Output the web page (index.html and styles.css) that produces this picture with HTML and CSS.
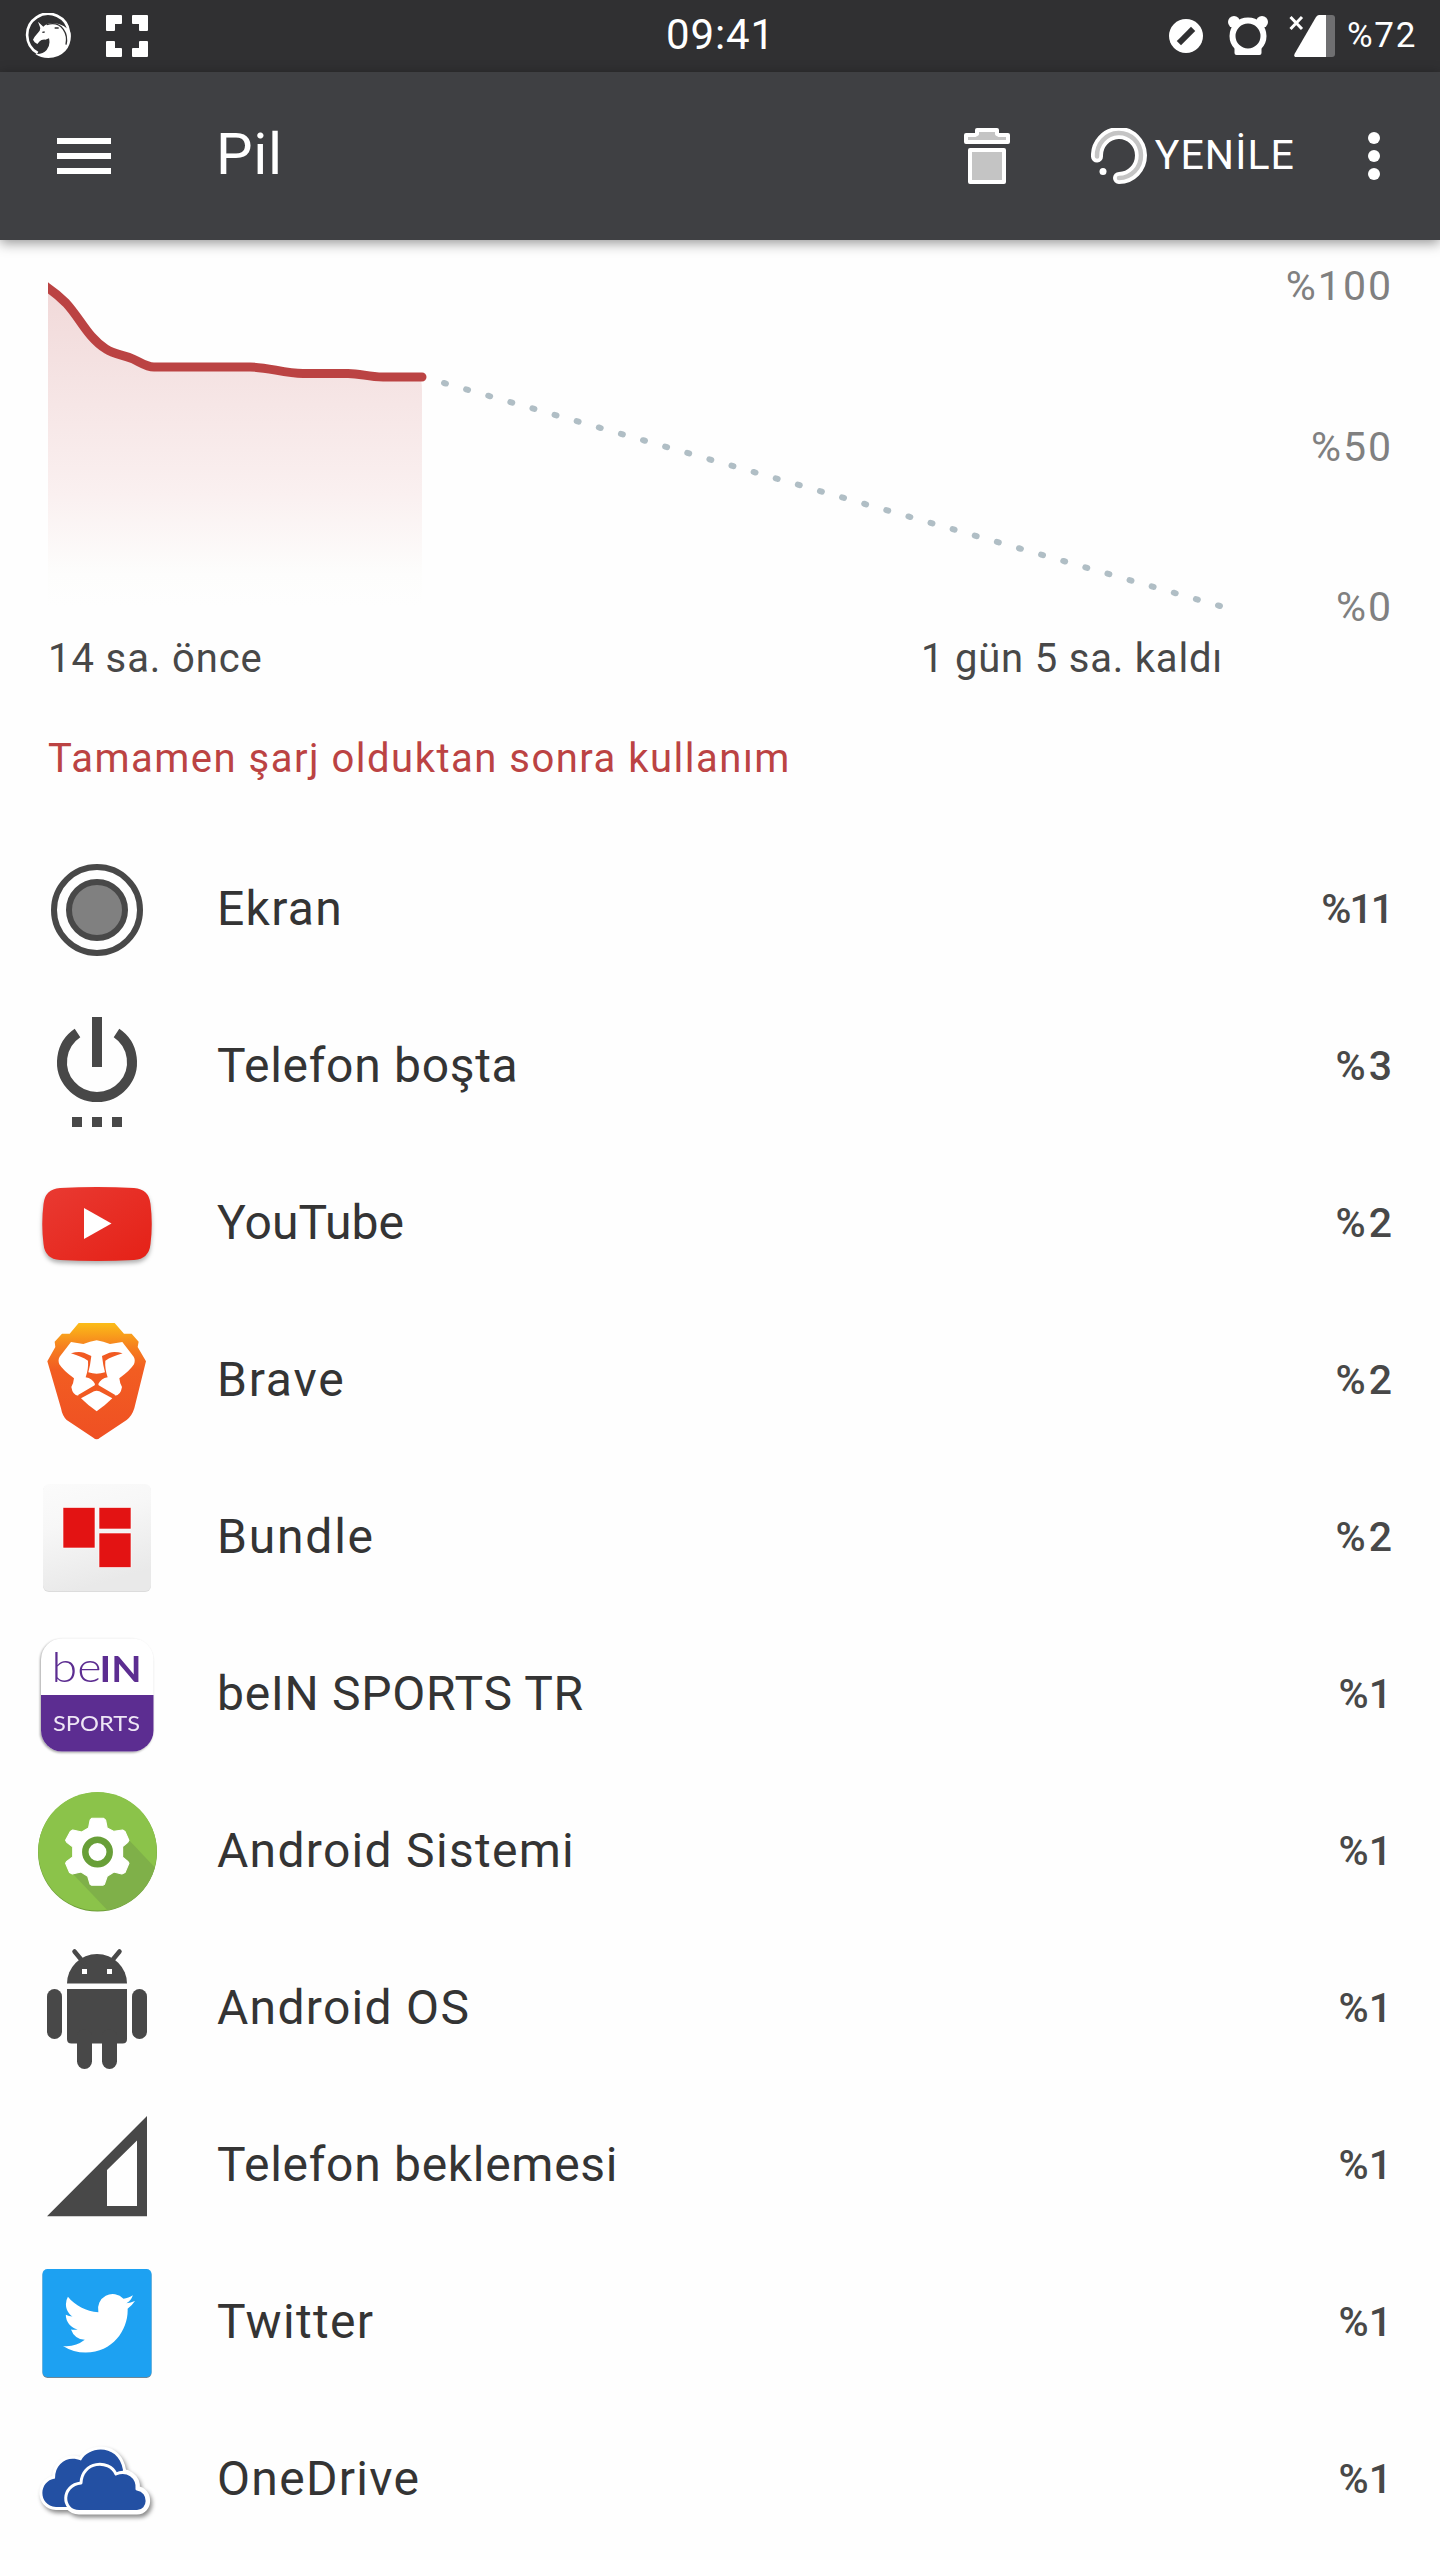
FILE: index.html
```html
<!DOCTYPE html>
<html lang="tr">
<head>
    <meta charset="UTF-8">
    <meta name="viewport" content="width=device-width, initial-scale=1.0">
    <title>Pil</title>
    <link rel="stylesheet" href="styles.css">
</head>
<body>
    <div class="status-bar">
        <div class="status-left">
            <svg class="ic-unicorn" width="46" height="46" viewBox="75 39 138 138">
                <path d="M113 159A63 63 0 1 1 207 97" fill="none" stroke="#fff" stroke-width="8"/>
                <path d="M114 65L130 80Q138 70 160 69Q196 72 212 98Q216 130 196 153Q176 174 145 174Q122 174 106 162Q128 164 140 150Q152 136 147 115L136 119Q124 118 119 124L112 132L104 127L99 119L104 110L119 92L121 84Z" fill="#fff"/>
                <path d="M140 74Q172 64 190 88Q204 108 198 134M164 84L176 84M127 97L134 96" fill="none" stroke="#303032" stroke-width="4"/>
            </svg>
            <svg width="42" height="42" viewBox="0 0 42 42" fill="#fff">
                <path d="M1 0H15Q16 0 16 1V8Q16 9 15 9H9V15Q9 16 8 16H1Q0 16 0 15V1Q0 0 1 0Z"/>
                <path d="M41 0H27Q26 0 26 1V8Q26 9 27 9H33V15Q33 16 34 16H41Q42 16 42 15V1Q42 0 41 0Z"/>
                <path d="M1 42H15Q16 42 16 41V34Q16 33 15 33H9V27Q9 26 8 26H1Q0 26 0 27V41Q0 42 1 42Z"/>
                <path d="M41 42H27Q26 42 26 41V34Q26 33 27 33H33V27Q33 26 34 26H41Q42 26 42 27V41Q42 42 41 42Z"/>
            </svg>
        </div>
        <div class="clock">09:41</div>
        <div class="status-right">
            <svg width="34" height="34" viewBox="0 0 34 34">
                <circle cx="17" cy="17" r="17" fill="#fff"/>
                <path d="M12 22L22 12" stroke="#303032" stroke-width="6" stroke-linecap="square"/>
            </svg>
            <svg class="ic-alarm" width="40" height="40" viewBox="0 0 40 40">
                <circle cx="6" cy="7" r="6" fill="#fff"/>
                <circle cx="34" cy="7" r="6" fill="#fff"/>
                <rect x="6.500" y="32" width="27" height="8" rx="2" fill="#fff"/>
                <circle cx="20" cy="21" r="15.500" fill="#303032" stroke="#fff" stroke-width="6"/>
            </svg>
            <svg class="ic-signal" width="46" height="42" viewBox="0 0 46 42">
                <path d="M1.500 2L13 14M13 2L1.500 14" stroke="#fff" stroke-width="3"/>
                <path d="M36 0H43Q46 0 46 3V39Q46 42 43 42H36Z" fill="#6f6f71"/>
                <path d="M30 0H37V42H6Q4.500 41 5.500 39L27 2Q28.500 0 30 0Z" fill="#fff"/>
            </svg>
            <span class="level">%72</span>
        </div>
    </div>

    <header class="toolbar">
        <svg width="54" height="36" viewBox="0 0 54 36" fill="#fff">
            <rect width="54" height="6"/>
            <rect y="15" width="54" height="6"/>
            <rect y="30" width="54" height="6"/>
        </svg>
        <h1>Pil</h1>
        <svg width="46" height="56" viewBox="0 0 46 56" fill="#c4c4c4" stroke="#fff" stroke-width="4" stroke-linejoin="round">
            <path d="M13 2H33V6L35 7H44V14H2V7H11L13 6Z"/>
            <rect x="6" y="22" width="34" height="32"/>
        </svg>
        <div class="refresh">
            <svg width="56" height="56" viewBox="0 0 56 56" fill="none" stroke-linecap="round">
                <path d="M6 28.500A22 22.500 0 1 1 28 50" stroke="#fff" stroke-width="12"/>
                <path d="M6 28.500A22 22.500 0 1 1 28 50" stroke="#c4c4c4" stroke-width="4.500"/>
                <circle cx="12" cy="43.500" r="3.500" fill="#fff"/>
            </svg>
            <span>YENİLE</span>
        </div>
        <svg width="12" height="48" viewBox="0 0 12 48" fill="#fff">
            <circle cx="6" cy="6" r="6"/>
            <circle cx="6" cy="24" r="6"/>
            <circle cx="6" cy="42" r="6"/>
        </svg>
    </header>

    <section class="usage">
        <div class="chart">
            <svg width="1180" height="368" viewBox="48 262 1180 368">
                <defs>
                    <linearGradient id="fill" gradientUnits="userSpaceOnUse" x1="0" y1="288" x2="0" y2="606">
                        <stop offset="0" stop-color="#f1d9d9"/>
                        <stop offset=".65" stop-color="#faf0f0"/>
                        <stop offset=".9" stop-color="#fdfdfc"/>
                        <stop offset="1" stop-color="#fefefe"/>
                    </linearGradient>
                </defs>
                <path d="M48 288C54 292 60 297 66 303C80 318 88 338 106 349C115 355 122 354 133 359C140 362 146 367 154 367H250C268 367 284 373.500 303 373.500H348C361 373.500 368 377 383 377H420Q422 382 422 390V606H48Z" fill="url(#fill)"/>
                <path d="M44 285L48 288C54 292 60 297 66 303C80 318 88 338 106 349C115 355 122 354 133 359C140 362 146 367 154 367H250C268 367 284 373.500 303 373.500H348C361 373.500 368 377 383 377H422" fill="none" stroke="#bb4343" stroke-width="9" stroke-linecap="round"/>
                <path d="M444 383L1221 606.300" fill="none" stroke="#b0bec5" stroke-width="6" stroke-linecap="round" stroke-dasharray="2 21.010"/>
            </svg>
            <div class="axis">
                <span>%100</span>
                <span>%50</span>
                <span>%0</span>
            </div>
        </div>
        <div class="times">
            <span class="since">14 sa. önce</span>
            <span class="left">1 gün 5 sa. kaldı</span>
        </div>
    </section>

    <h2>Tamamen şarj olduktan sonra kullanım</h2>

    <ul class="apps">
        <li>
            <svg viewBox="32 0 130 157">
                <circle cx="97" cy="78" r="43" fill="none" stroke="#484848" stroke-width="6"/>
                <circle cx="97" cy="78" r="28" fill="#808080" stroke="#484848" stroke-width="6"/>
            </svg>
            <span class="name wide">Ekran</span>
            <span class="value eleven">%11</span>
        </li>
        <li>
            <svg viewBox="32 0 130 157">
                <path d="M77.500 44A35 35 0 1 0 116.500 44" fill="none" stroke="#484848" stroke-width="10"/>
                <path d="M92 28H102V78H92ZM72 128H82V138H72ZM92 128H102V138H92ZM112 128H122V138H112Z" fill="#484848"/>
            </svg>
            <span class="name">Telefon boşta</span>
            <span class="value">%3</span>
        </li>
        <li>
            <svg class="shadow" viewBox="32 0 130 157">
                <defs>
                    <linearGradient id="yt" x1="0" y1="0" x2="1" y2="1">
                        <stop offset="0" stop-color="#e93a32"/>
                        <stop offset="1" stop-color="#e52117"/>
                    </linearGradient>
                </defs>
                <path d="M60 42Q97 40 134 42Q149 43 150.500 58Q153 78 150.500 98Q149 113 134 114Q97 116 60 114Q45 113 43.500 98Q41 78 43.500 58Q45 43 60 42Z" fill="url(#yt)"/>
                <path d="M84 62V93L111.500 77.500Z" fill="#fff"/>
            </svg>
            <span class="name tight">YouTube</span>
            <span class="value">%2</span>
        </li>
        <li>
            <svg viewBox="32 0 130 157">
                <defs>
                    <linearGradient id="mane" x1="0" y1="0" x2="0" y2="1">
                        <stop offset="0" stop-color="#fbbd18"/>
                        <stop offset=".2" stop-color="#f6811f"/>
                        <stop offset=".4" stop-color="#f25d22"/>
                        <stop offset="1" stop-color="#ef5023"/>
                    </linearGradient>
                </defs>
                <g transform="translate(0 -143) scale(.3333)">
                    <path d="M236 489H344L372 521H395L416 545L413 561L438 604L403 745Q396 768 380 780L300 833Q290 842 280 833L200 780Q187 768 183 745L142 604L166 561L164 545L186 521H209Z" fill="url(#mane)"/>
                    <path d="M213 546L250 552Q270 544 290 541Q310 544 330 552L367 546L401 590Q407 600 402 613Q390 632 358 655Q359 668 366 681Q362 706 345 707L290 676L235 707Q218 706 214 681Q221 668 222 655Q190 632 178 613Q173 600 179 590Z" fill="#fff"/>
                    <path d="M213 580Q235 573 252 578L274 588Q271 615 265 637Q290 645 315 637Q309 615 306 588L328 578Q345 573 368 580Q335 590 316 602Q314 625 323 652Q303 655 295 672L296 676L347 706L337 712L290 688L243 712L233 706L284 676L285 672Q277 655 257 652Q266 625 264 602Q245 590 213 580Z" fill="#f15a22"/>
                    <path d="M243 715L282 694Q290 690 298 694L337 715Q315 737 290 754Q265 737 243 715Z" fill="#fff"/>
                </g>
            </svg>
            <span class="name wider">Brave</span>
            <span class="value">%2</span>
        </li>
        <li>
            <svg viewBox="32 0 130 157">
                <defs>
                    <linearGradient id="tile" x1="0" y1="0" x2=".3" y2="1">
                        <stop offset="0" stop-color="#fbfbfb"/>
                        <stop offset=".4" stop-color="#f7f7f7"/>
                        <stop offset="1" stop-color="#e9e9e9"/>
                    </linearGradient>
                </defs>
                <rect x="43" y="25" width="108" height="107" rx="6" fill="#dcdcdc"/>
                <rect x="43" y="24" width="108" height="107" rx="6" fill="url(#tile)"/>
                <path d="M63 47.500H95V88H63ZM99 47.500H131V69H99ZM99 73H131V107.500H99Z" fill="#e31313" stroke="#fff" stroke-opacity=".6"/>
            </svg>
            <span class="name wider">Bundle</span>
            <span class="value">%2</span>
        </li>
        <li>
            <svg class="shadow-left" viewBox="32 0 130 157">
                <rect x="41" y="21.500" width="112.500" height="113" rx="21" fill="#fff"/>
                <path d="M41 78H153.500V113.500A21 21 0 0 1 132.500 134.500H62A21 21 0 0 1 41 113.500Z" fill="#5c2d91"/>
                <text class="bein" x="51.500" y="65" textLength="50" lengthAdjust="spacingAndGlyphs">be</text>
                <text class="bein bold" x="99.500" y="65" textLength="42" lengthAdjust="spacingAndGlyphs">IN</text>
                <text class="sports" x="53" y="114" textLength="87" lengthAdjust="spacingAndGlyphs">SPORTS</text>
            </svg>
            <span class="name">beIN SPORTS TR</span>
            <span class="value one">%1</span>
        </li>
        <li>
            <svg viewBox="32 0 130 157">
                <defs>
                    <clipPath id="disc"><circle cx="97.500" cy="77.500" r="59.500"/></clipPath>
                </defs>
                <circle cx="97.500" cy="78" r="59.500" fill="#6d9d38"/>
                <circle cx="97.500" cy="77.300" r="59.300" fill="#8bc34a"/>
                <path clip-path="url(#disc)" d="M72 99L128 65L160 99V140H111Z" fill="#7fb049"/>
                <g transform="translate(0 6) scale(.3954 .3333)">
                    <path d="M232 115H262L267 120L271 144L288 154L310 150L316 154L326 181L323 187L310 200V231L323 244L326 250L316 278L308 282L288 276L271 289L264 313L260 316H232L228 313L222 289L205 276L183 282L176 278L166 250L169 244L184 231V201L169 187L166 181L178 154L184 150L207 156L224 144L228 120Z" fill="#fff" stroke="#fff" stroke-width="3" stroke-linejoin="round"/>
                </g>
                <circle cx="97.500" cy="78" r="12.200" fill="none" stroke="#689f38" stroke-width="6.500"/>
            </svg>
            <span class="name wide">Android Sistemi</span>
            <span class="value one">%1</span>
        </li>
        <li>
            <svg viewBox="32 0 130 157" fill="#484848">
                <path d="M67 52.500A30 29.500 0 0 1 127 52.500Z"/>
                <path d="M74.500 20.500L84 32M119.500 20.500L110 32" stroke="#484848" stroke-width="4.500" stroke-linecap="round"/>
                <path d="M82 38H87V43H82ZM107 38H112V43H107Z" fill="#fff"/>
                <path d="M67 58H127V108Q127 112.500 122.500 112.500H71.500Q67 112.500 67 108Z"/>
                <rect x="47" y="58" width="15" height="50" rx="7.500"/>
                <rect x="132" y="58" width="15" height="50" rx="7.500"/>
                <rect x="77" y="98" width="15" height="40" rx="7.500"/>
                <rect x="102" y="98" width="15" height="40" rx="7.500"/>
            </svg>
            <span class="name wide">Android OS</span>
            <span class="value one">%1</span>
        </li>
        <li>
            <svg viewBox="32 0 130 157">
                <path d="M47 128.300L147 28V128.300ZM107 82V118H137V52.500Z" fill="#484848" fill-rule="evenodd"/>
            </svg>
            <span class="name">Telefon beklemesi</span>
            <span class="value one">%1</span>
        </li>
        <li>
            <svg viewBox="32 0 130 157">
                <rect x="42.500" y="25" width="109" height="108" rx="5" fill="#6f8797"/>
                <rect x="42.500" y="24" width="109" height="108" rx="5" fill="#1da1f2"/>
                <path transform="translate(63 42.300) scale(3)" fill="#fff" d="M23.953 4.570a10 10 0 01-2.825.775 4.958 4.958 0 002.163-2.723c-.951.555-2.005.959-3.127 1.184a4.920 4.920 0 00-8.384 4.482C7.690 8.095 4.067 6.130 1.640 3.162a4.822 4.822 0 00-.666 2.475c0 1.710.87 3.213 2.188 4.096a4.904 4.904 0 01-2.228-.616v.06a4.923 4.923 0 003.946 4.827 4.996 4.996 0 01-2.212.085 4.936 4.936 0 004.604 3.417 9.867 9.867 0 01-6.102 2.105c-.39 0-.779-.023-1.170-.067a13.995 13.995 0 007.557 2.209c9.053 0 13.998-7.496 13.998-13.985 0-.21 0-.42-.015-.63A9.935 9.935 0 0024 4.590z"/>
            </svg>
            <span class="name wide">Twitter</span>
            <span class="value one">%1</span>
        </li>
        <li>
            <svg class="shadow-right" viewBox="32 0 130 157" fill="#2350a3" stroke="#fff" stroke-width="3" stroke-linejoin="round">
                <path stroke-width="6" d="M56 105C38 104 38 79 55 76.500C55 60 69 53 81 58.500C89 43 119 42 123 68L120 105Z"/>
                <path stroke-width="6" d="M79 109.500C61 109 61 83 81 81C82 59 109 57 116 72C127 67 138 75 137 87C151 89 150 109.500 137 109.500Z"/>
                <path stroke="none" d="M56 105C38 104 38 79 55 76.500C55 60 69 53 81 58.500C89 43 119 42 123 68L120 105Z"/>
                <path d="M79 109.500C61 109 61 83 81 81C82 59 109 57 116 72C127 67 138 75 137 87C151 89 150 109.500 137 109.500Z"/>
            </svg>
            <span class="name wide">OneDrive</span>
            <span class="value one">%1</span>
        </li>
    </ul>
</body>
</html>
```
FILE: styles.css
```css
*{
    margin: 0;
    padding: 0;
    box-sizing: border-box;
}
body{
    width: 1440px;
    height: 2560px;
    overflow: hidden;
    background-color: #fefefe;
    font-family: Roboto, "Noto Sans", sans-serif;
    color: #343434;
}
svg{
    display: block;
    flex-shrink: 0;
}

/* status bar */
.status-bar{
    display: grid;
    grid-template-columns: 1fr auto 1fr;
    align-items: center;
    height: 72px;
    padding: 0 24px 0 25px;
    background-color: #303032;
    color: white;
}
.status-left{
    display: flex;
    align-items: center;
    gap: 35px;
}
.clock{
    font-size: 42px;
    line-height: 68px;
    padding-bottom: 2px;
    letter-spacing: 0.9px;
}
.status-right{
    display: flex;
    align-items: center;
    justify-content: flex-end;
}
.ic-alarm{
    margin-left: 25px;
    margin-bottom: 2px;
}
.ic-signal{
    margin-left: 21px;
}
.level{
    font-size: 35px;
    margin-left: 12px;
    margin-right: -1px;
    padding-bottom: 1px;
    letter-spacing: 1.7px;
}

/* toolbar */
.toolbar{
    display: flex;
    align-items: center;
    height: 168px;
    padding: 0 60px 0 57px;
    background-color: #3f4043;
    color: white;
    box-shadow: 0 3px 12px rgba(0,0,0,0.42);
}
.toolbar h1{
    flex: 1;
    margin-left: 105px;
    padding-bottom: 4px;
    font-size: 58px;
    font-weight: 400;
    letter-spacing: 0.6px;
}
.refresh{
    display: flex;
    align-items: center;
    gap: 8px;
    margin-left: 81px;
    margin-right: 73px;
    font-size: 41px;
}
.refresh span{
    padding-bottom: 2px;
    letter-spacing: 1.1px;
}

/* chart */
.usage{
    padding: 22px 48px 0 48px;
}
.chart{
    display: flex;
    justify-content: space-between;
    height: 368px;
}
.axis{
    display: flex;
    flex-direction: column;
    justify-content: space-between;
    align-items: flex-end;
    margin-right: -1px;
    padding-top: 1px;
    font-size: 41px;
    line-height: 46px;
    letter-spacing: 2px;
    color: #808080;
}
.times{
    display: flex;
    justify-content: space-between;
    width: 1175px;
    padding-top: 1px;
    font-size: 40px;
    line-height: 55px;
    color: #484848;
}
.since{
    letter-spacing: 0.9px;
}
.left{
    letter-spacing: 0.8px;
}
h2{
    padding-left: 48px;
    font-size: 40px;
    font-weight: 400;
    line-height: 146px;
    letter-spacing: 1.5px;
    color: #bb4343;
}

/* app list */
.apps{
    list-style: none;
}
.apps li{
    display: flex;
    align-items: center;
    height: 157px;
    padding: 0 48px 0 32px;
}
.apps svg{
    width: 130px;
    height: 157px;
}
.name{
    flex: 1;
    margin-left: 55px;
    padding-bottom: 4px;
    font-size: 48px;
    letter-spacing: 0.7px;
}
.tight{
    letter-spacing: 0.1px;
}
.wide{
    letter-spacing: 1.3px;
}
.wider{
    letter-spacing: 1.8px;
}
.value{
    margin-right: -3px;
    padding-bottom: 4px;
    font-size: 41px;
    font-weight: 500;
    letter-spacing: 3px;
    color: #484848;
}
.one{
    margin-right: 0;
    letter-spacing: 0;
}
.eleven{
    margin-right: 0;
    letter-spacing: -2px;
}
.shadow{
    filter: drop-shadow(0 3px 2px rgba(0,0,0,0.3));
}
.shadow-left{
    filter: drop-shadow(-1px 1px 1px rgba(0,0,0,0.35));
}
.shadow-right{
    filter: drop-shadow(2px 3px 2px rgba(0,0,0,0.45));
}
.bein{
    font-family: Lato, sans-serif;
    font-size: 42px;
    font-weight: 300;
    fill: #5c2d91;
}
.bold{
    font-weight: 700;
    font-size: 37px;
}
.sports{
    font-family: Lato, sans-serif;
    font-size: 22px;
    fill: #eee6f5;
}
```
